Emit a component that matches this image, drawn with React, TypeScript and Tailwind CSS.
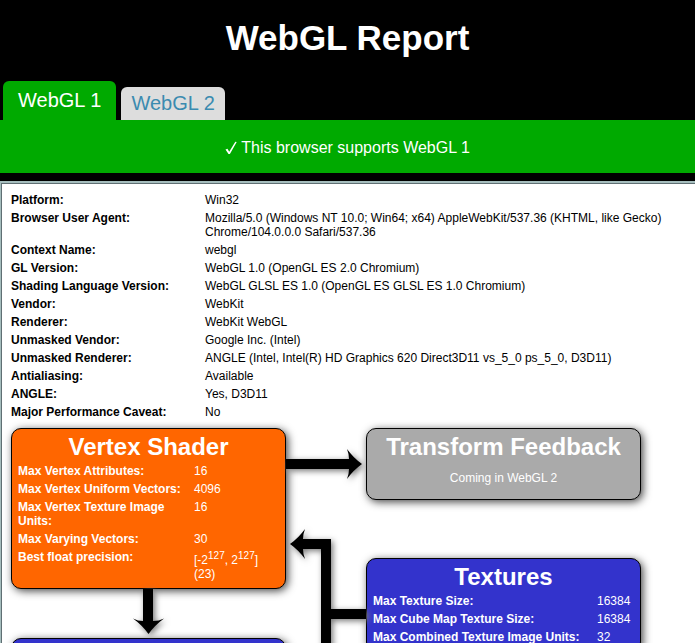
import type { ReactNode } from "react";

type Row = { label: string; value: ReactNode };

const contextRows: Row[] = [
  { label: "Platform:", value: "Win32" },
  {
    label: "Browser User Agent:",
    value:
      "Mozilla/5.0 (Windows NT 10.0; Win64; x64) AppleWebKit/537.36 (KHTML, like Gecko) Chrome/104.0.0.0 Safari/537.36",
  },
  { label: "Context Name:", value: "webgl" },
  { label: "GL Version:", value: "WebGL 1.0 (OpenGL ES 2.0 Chromium)" },
  { label: "Shading Language Version:", value: "WebGL GLSL ES 1.0 (OpenGL ES GLSL ES 1.0 Chromium)" },
  { label: "Vendor:", value: "WebKit" },
  { label: "Renderer:", value: "WebKit WebGL" },
  { label: "Unmasked Vendor:", value: "Google Inc. (Intel)" },
  {
    label: "Unmasked Renderer:",
    value: "ANGLE (Intel, Intel(R) HD Graphics 620 Direct3D11 vs_5_0 ps_5_0, D3D11)",
  },
  { label: "Antialiasing:", value: "Available" },
  { label: "ANGLE:", value: "Yes, D3D11" },
  { label: "Major Performance Caveat:", value: "No" },
];

function Power() {
  return <sup className="static align-super text-[10px] leading-3">127</sup>;
}

const vertexRows: Row[] = [
  { label: "Max Vertex Attributes:", value: "16" },
  { label: "Max Vertex Uniform Vectors:", value: "4096" },
  { label: "Max Vertex Texture Image Units:", value: "16" },
  { label: "Max Varying Vectors:", value: "30" },
  {
    label: "Best float precision:",
    value: (
      <>
        [-2
        <Power />, 2<Power />] (23)
      </>
    ),
  },
];

const textureRows: Row[] = [
  { label: "Max Texture Size:", value: "16384" },
  { label: "Max Cube Map Texture Size:", value: "16384" },
  { label: "Max Combined Texture Image Units:", value: "32" },
];

function DataTable({ rows, labelWidth }: { rows: Row[]; labelWidth: string }) {
  return (
    <table className="w-full table-fixed">
      <colgroup>
        <col className={labelWidth} />
        <col />
      </colgroup>
      <tbody>
        {rows.map((row) => (
          <tr key={row.label}>
            <th scope="row" className="p-0.5 text-left align-top font-bold">
              {row.label}
            </th>
            <td className="p-0.5 align-top">{row.value}</td>
          </tr>
        ))}
      </tbody>
    </table>
  );
}

function Stage({ title, color, children }: { title?: string; color: string; children?: ReactNode }) {
  return (
    <section
      className={`min-h-10 rounded-[10px] border border-black p-1 pb-[5px] text-white shadow-[2px_2px_8px_#444] ${color}`}
    >
      {title && <h2 className="mb-px text-center text-2xl leading-7 font-bold">{title}</h2>}
      {children}
    </section>
  );
}

const arrowShadow = "block overflow-visible drop-shadow-[2px_2px_3px_#777]";

export default function App() {
  return (
    <div className="flex h-screen flex-col overflow-hidden bg-black font-['Liberation_Sans',Arial,sans-serif] text-xs leading-[14px] text-black">
      <header>
        <h1 className="pt-4 pb-[21px] text-center text-[35px] leading-[44px] font-bold text-white">WebGL Report</h1>
        <nav className="flex items-end gap-[5px] px-[3px] text-xl">
          <a href="#webgl1" aria-current="page" className="rounded-t-md bg-[#0a0] px-[15px] py-1.5 leading-[27px] text-white">
            WebGL 1
          </a>
          <a href="#webgl2" className="rounded-t-md bg-[#ddd] px-[10px] py-[3px] leading-[27px] text-[#3b8bb0]">
            WebGL 2
          </a>
        </nav>
        <p className="bg-[#0a0] pt-4 pb-3.5 text-center text-base leading-[23px] text-white">
          <svg aria-hidden="true" viewBox="0 0 12 14" className="inline h-[14px] w-3 align-[-2px]">
            <path d="M.5 8.500l2-.8 1.700 3L10.300.8l1.400.2L4.900 13H3.500z" fill="currentColor" />
          </svg>{" "}
          This browser supports WebGL 1
        </p>
      </header>

      <main className="mt-2 min-h-0 grow overflow-hidden border-t-2 border-l border-[#a5bdbd]">
        <div className="min-h-full border-t border-l border-[#5f6f73] bg-white px-[7px] pt-[7px]">
          <div className="pb-[7px]">
            <DataTable rows={contextRows} labelWidth="w-[194px]" />
          </div>

          <div className="flex items-start px-0.5">
            <div className="w-[275px] shrink-0">
              <Stage title="Vertex Shader" color="bg-[#f60]">
                <DataTable rows={vertexRows} labelWidth="w-[176px]" />
              </Stage>
              <svg aria-hidden="true" viewBox="0 0 275 49" className={`h-[49px] w-full ${arrowShadow}`}>
                <path d="M132 0h10v32q6 0 11-2.500Q144 36 137.500 45 131 36 122 29.500q5 2.500 10 2.500z" />
              </svg>
              <Stage color="bg-[#33c]" />
            </div>

            <svg aria-hidden="true" viewBox="0 0 80 260" className={`h-[260px] w-20 shrink-0 ${arrowShadow}`}>
              <path d="M0 31h63q0-5-2-10 6.500 9 15 15-8.500 6-15 15 2-5 2-10H0z" />
              <path d="M4 116q8.500-6 15-15-2 5-2 10h28v70h35v10H45v69H35V121H17q0 5 2 10-6.500-9-15-15z" />
            </svg>

            <div className="flex w-[275px] shrink-0 flex-col gap-[58px]">
              <Stage title="Transform Feedback" color="bg-[#aaa]">
                <p className="py-[9px] text-center">Coming in WebGL 2</p>
              </Stage>
              <Stage title="Textures" color="bg-[#33c]">
                <DataTable rows={textureRows} labelWidth="w-[224px]" />
              </Stage>
            </div>
          </div>
        </div>
      </main>
    </div>
  );
}
